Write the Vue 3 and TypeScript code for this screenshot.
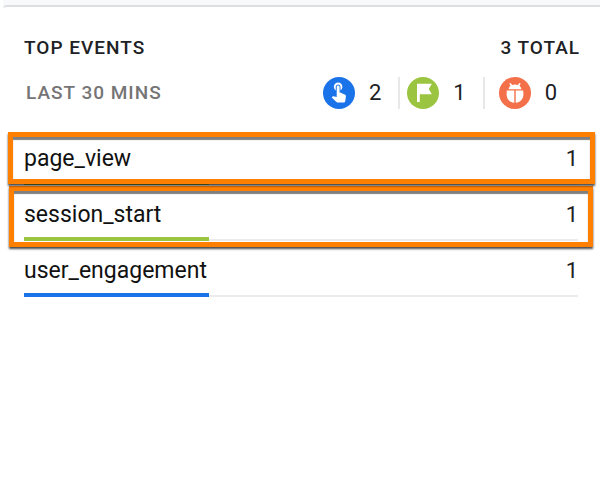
<script setup lang="ts">
interface EventRow {
  name: string
  count: number
  share: number
  tone: 'green' | 'blue'
  frame?: 'outer' | 'inner'
}

const rows: EventRow[] = [
  { name: 'page_view', count: 1, share: 33.4, tone: 'green', frame: 'outer' },
  { name: 'session_start', count: 1, share: 33.4, tone: 'green', frame: 'inner' },
  { name: 'user_engagement', count: 1, share: 33.4, tone: 'blue' },
]
</script>

<template>
  <main class="page">
    <section class="card">
      <header class="head">
        <h1 class="title">TOP EVENTS</h1>
        <span class="title">3 TOTAL</span>
      </header>
      <div class="summary">
        <h2 class="period">LAST 30 MINS</h2>
        <ul class="stats">
          <li class="stat">
            <svg class="icon" viewBox="0 0 32 32" aria-hidden="true">
              <circle cx="16" cy="16" r="16" fill="#1a73e8" />
              <path
                transform="translate(4.2 2.7) scale(.95)"
                fill="#fff"
                d="M9 11.24V7.5C9 6.12 10.12 5 11.5 5S14 6.12 14 7.5v3.74c1.21-.81 2-2.18 2-3.74C16 5.01 13.99 3 11.5 3S7 5.01 7 7.5c0 1.56.79 2.93 2 3.74zm9.84 4.63l-4.54-2.26c-.17-.07-.35-.11-.54-.11H13v-6c0-.83-.67-1.5-1.5-1.5S10 6.67 10 7.5v10.74l-3.43-.72c-.08-.01-.15-.03-.24-.03-.31 0-.59.13-.79.33l-.79.8 4.94 4.94c.27.27.65.44 1.06.44h6.79c.75 0 1.33-.55 1.44-1.28l.75-5.27c.01-.07.02-.14.02-.2 0-.62-.38-1.16-.91-1.38z"
              />
            </svg>
            <span class="value">2</span>
          </li>
          <li class="stat">
            <svg class="icon" viewBox="0 0 32 32" aria-hidden="true">
              <circle cx="16" cy="16" r="16" fill="#9bc441" />
              <path fill="#fff" d="M10 6.800H24.800L21.800 12l3 5.300H12.800v7.700H10z" />
            </svg>
            <span class="value">1</span>
          </li>
          <li class="stat">
            <svg class="icon" viewBox="0 0 32 32" aria-hidden="true">
              <circle cx="16" cy="16" r="16" fill="#f4704a" />
              <path
                fill="#fff"
                d="M10.300 6.600l1.200-.7 1.700 2c1.800-.7 3.800-.7 5.600 0l1.700-2 1.200.7-1.200 2.200c1 .9 1.700 2 1.900 3.400H9.600c.2-1.400.9-2.500 1.900-3.400z"
              />
              <path
                fill="#fff"
                d="M7.800 13.600h7.500v12.200C10.800 25.500 7.600 22 7.600 17.500zM24.200 13.600h-7.500v12.200c4.500-.3 7.700-3.800 7.700-8.300z"
              />
            </svg>
            <span class="value">0</span>
          </li>
        </ul>
      </div>
      <ul class="events">
        <li v-for="row in rows" :key="row.name" class="event">
          <span class="name">{{ row.name }}</span>
          <span class="count">{{ row.count }}</span>
          <i class="bar" :class="row.tone" :style="{ width: row.share + '%' }"></i>
          <i v-if="row.frame" class="frame" :class="row.frame"></i>
        </li>
      </ul>
    </section>
  </main>
</template>

<style>
body {
  margin: 0;
  background: #fff;
}
</style>

<style scoped>
.page {
  padding: 5px 0 0 3px;
  background: linear-gradient(#f8f9fa, #f8f9fa) 3px 0 / 100% 6px no-repeat;
  font-family: Roboto, "Liberation Sans", sans-serif;
  color: #202124;
}
.card {
  padding: 28px 22px 24px 21px;
  border-top: 2px solid #dddfe2;
  border-top-left-radius: 4px;
  background: #fff;
}
.head,
.summary,
.event {
  display: flex;
  align-items: center;
  justify-content: space-between;
}
.head {
  height: 26px;
  margin-right: -2px;
}
.title,
.period {
  margin: 0;
  font-size: 19px;
  line-height: 24px;
  font-weight: 500;
  letter-spacing: 1px;
}
.summary {
  height: 32px;
  margin: 16px 0 20px;
  padding-left: 2px;
}
.period {
  color: #757575;
}
.stats,
.events {
  margin: 0;
  padding: 0;
  list-style: none;
}
.stats {
  display: flex;
}
.stat {
  display: flex;
  align-items: center;
  gap: 14px;
  padding-right: 17px;
}
.stat + .stat {
  padding-left: 7px;
  border-left: 2px solid #e8e8e8;
}
.stat:last-child {
  padding: 0 21px 0 14px;
}
.icon {
  display: block;
  width: 32px;
  height: 32px;
}
.value,
.event {
  font-size: 22px;
  line-height: 26px;
}
.event {
  position: relative;
  height: 54px;
  border-bottom: 2px solid #ececee;
  color: #111;
}
.name,
.count {
  padding-top: 5px;
}
.name {
  font-size: 23px;
}
.count {
  color: #202124;
}
.bar {
  position: absolute;
  bottom: -2px;
  left: 0;
  height: 4px;
}
.green {
  background: #9bc441;
}
.blue {
  background: #1a73e8;
}
.frame {
  position: absolute;
  border: 5px solid #ff7f00;
  box-shadow: 0 2px 2px rgba(0, 0, 0, 0.7), inset 0 3px 1px rgba(0, 0, 0, 0.5);
  pointer-events: none;
}
.outer {
  z-index: 2;
  inset: 3px -17px -1px -16px;
}
.inner {
  z-index: 1;
  inset: 1px -15px -8px -15px;
}
</style>
